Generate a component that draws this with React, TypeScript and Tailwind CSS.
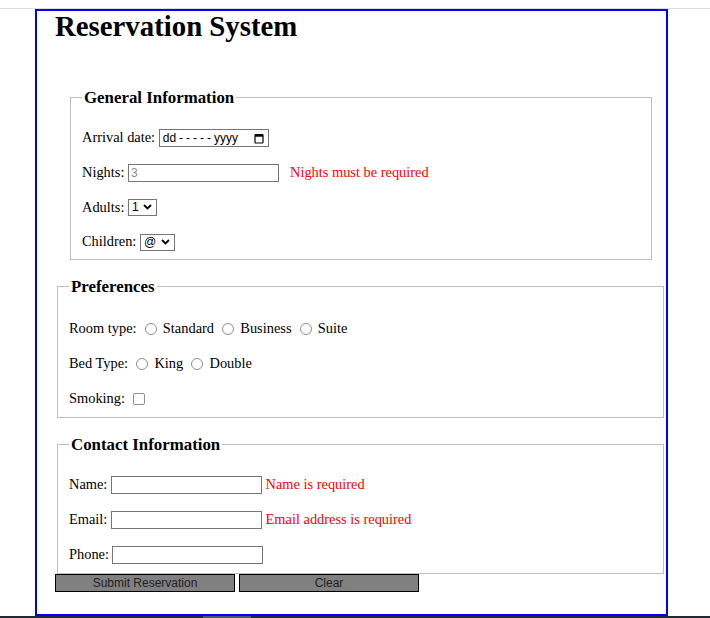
import React from 'react';

const serif = "font-['Liberation_Serif','Times_New_Roman',serif]";
const sans = "font-['Liberation_Sans',Arial,sans-serif]";

function Radio() {
  return <span className="ml-[8px] inline-block h-[12px] w-[12px] shrink-0 rounded-full border border-[#8f8f8f] bg-white" />;
}

function Chevron() {
  return (
    <svg width="9" height="6" viewBox="0 0 9 6" className="shrink-0">
      <path d="M1 1l3.5 3.5L8 1" fill="none" stroke="#000" strokeWidth="1.8" />
    </svg>
  );
}

function FakeSelect({ value, width }: { value: string; width: string }) {
  return (
    <span className={`ml-[3.6px] flex h-[17px] ${width} items-center justify-between border border-[#767676] bg-white pl-[3px] pr-[4px] ${sans} text-[12px] text-black`}>
      {value}
      <Chevron />
    </span>
  );
}

function TextBox({ ml = 'ml-[3.6px]', placeholder }: { ml?: string; placeholder?: string }) {
  return (
    <input
      type="text"
      placeholder={placeholder}
      className={`${ml} h-[18px] w-[151px] border border-[#767676] bg-white px-[2px] ${sans} text-[12px] text-black placeholder:text-[#8a8a8a] outline-none`}
    />
  );
}

function Row({ children, h = 'h-[34.6px]' }: { children: React.ReactNode; h?: string }) {
  return <div className={`flex ${h} items-center whitespace-nowrap`}>{children}</div>;
}

export default function App() {
  return (
    <div className={`relative h-[618px] w-full overflow-hidden bg-white text-black ${serif} text-[14.4px]`}>
      <div className="h-[9px] border-b border-[#dddddd]" />
      <div className="ml-[35px] flex h-[607px] w-[633px] flex-col border-2 border-t-0 border-[#0000ff]">
        <div className="border-t-2 border-[#0000ff]" />
        <h1 className="ml-[18px] mt-[-1px] text-[28.8px] font-bold leading-[33px]">Reservation System</h1>

        {/* General */}
        <fieldset className="ml-[33px] mr-[14px] mt-[45px] border border-[#c0c0c0] pl-[11px]">
          <legend className="px-[2px] text-[16.85px] font-bold leading-[19px]">General Information</legend>
          <div className="pt-[14px]">
            <Row>
              <span>Arrival date:</span>
              <span className={`ml-[3.6px] flex h-[18px] w-[110px] items-center justify-between border border-[#767676] pl-[3px] pr-[4px] ${sans} text-[12px]`}>
                <span>
                  dd<span className="ml-[3px] tracking-[3px]">-----</span>yyyy
                </span>
                <svg width="10" height="11" viewBox="0 0 10 11">
                  <rect x="1" y="1.5" width="8" height="8.5" rx="0.8" fill="none" stroke="#000" strokeWidth="1.2" />
                  <rect x="1" y="1.5" width="8" height="2.2" fill="#000" />
                </svg>
              </span>
            </Row>
            <Row>
              <span>Nights:</span>
              <TextBox placeholder="3" />
              <span className="ml-[11px] text-[#ff0000]">Nights must be required</span>
            </Row>
            <Row>
              <span>Adults:</span>
              <FakeSelect value="1" width="w-[29px]" />
            </Row>
            <Row>
              <span>Children:</span>
              <FakeSelect value="@" width="w-[35px]" />
            </Row>
          </div>
        </fieldset>

        {/* Preferences */}
        <fieldset className="ml-[20px] mr-[2px] mt-[17px] border border-[#c0c0c0] pb-[1px] pl-[11px]">
          <legend className="px-[2px] text-[16.85px] font-bold leading-[19px]">Preferences</legend>
          <div className="pt-[15px]">
            <Row h="h-[35px]">
              <span>Room type:</span>
              <Radio />
              <span className="ml-[6.3px]">Standard</span>
              <Radio />
              <span className="ml-[6.3px]">Business</span>
              <Radio />
              <span className="ml-[6.3px]">Suite</span>
            </Row>
            <Row h="h-[35px]">
              <span>Bed Type:</span>
              <Radio />
              <span className="ml-[6.3px]">King</span>
              <Radio />
              <span className="ml-[6.3px]">Double</span>
            </Row>
            <Row h="h-[35px]">
              <span>Smoking:</span>
              <span className="ml-[8px] inline-block h-[12px] w-[12px] rounded-[2px] border border-[#8f8f8f]" />
            </Row>
          </div>
        </fieldset>

        {/* Contact */}
        <fieldset className="ml-[20px] mr-[2px] mt-[17px] border border-[#c0c0c0] pb-[1px] pl-[11px]">
          <legend className="px-[2px] text-[16.85px] font-bold leading-[19px]">Contact Information</legend>
          <div className="pt-[13px]">
            <Row h="h-[35px]">
              <span>Name:</span>
              <TextBox />
              <span className="ml-[3.6px] text-[#ff0000]">Name is required</span>
            </Row>
            <Row h="h-[35px]">
              <span>Email:</span>
              <TextBox />
              <span className="ml-[3.6px] text-[#ff0000]">Email address is required</span>
            </Row>
            <Row h="h-[35px]">
              <span>Phone:</span>
              <TextBox ml="ml-[3px]" />
            </Row>
          </div>
        </fieldset>

        <div className="ml-[18px] flex gap-[4px]">
          <button className={`h-[18px] w-[180px] border border-black bg-[#808080] ${sans} text-[12px] leading-[16px] text-[#222]`}>
            Submit Reservation
          </button>
          <button className={`h-[18px] w-[180px] border border-black bg-[#808080] ${sans} text-[12px] leading-[16px] text-[#222]`}>
            Clear
          </button>
        </div>
      </div>
      <div className="absolute bottom-0 left-0 flex h-[2px] w-full bg-[#1f2a33]">
        <div className="ml-[203px] h-full w-[48px] bg-[#4a5660]" />
      </div>
    </div>
  );
}
